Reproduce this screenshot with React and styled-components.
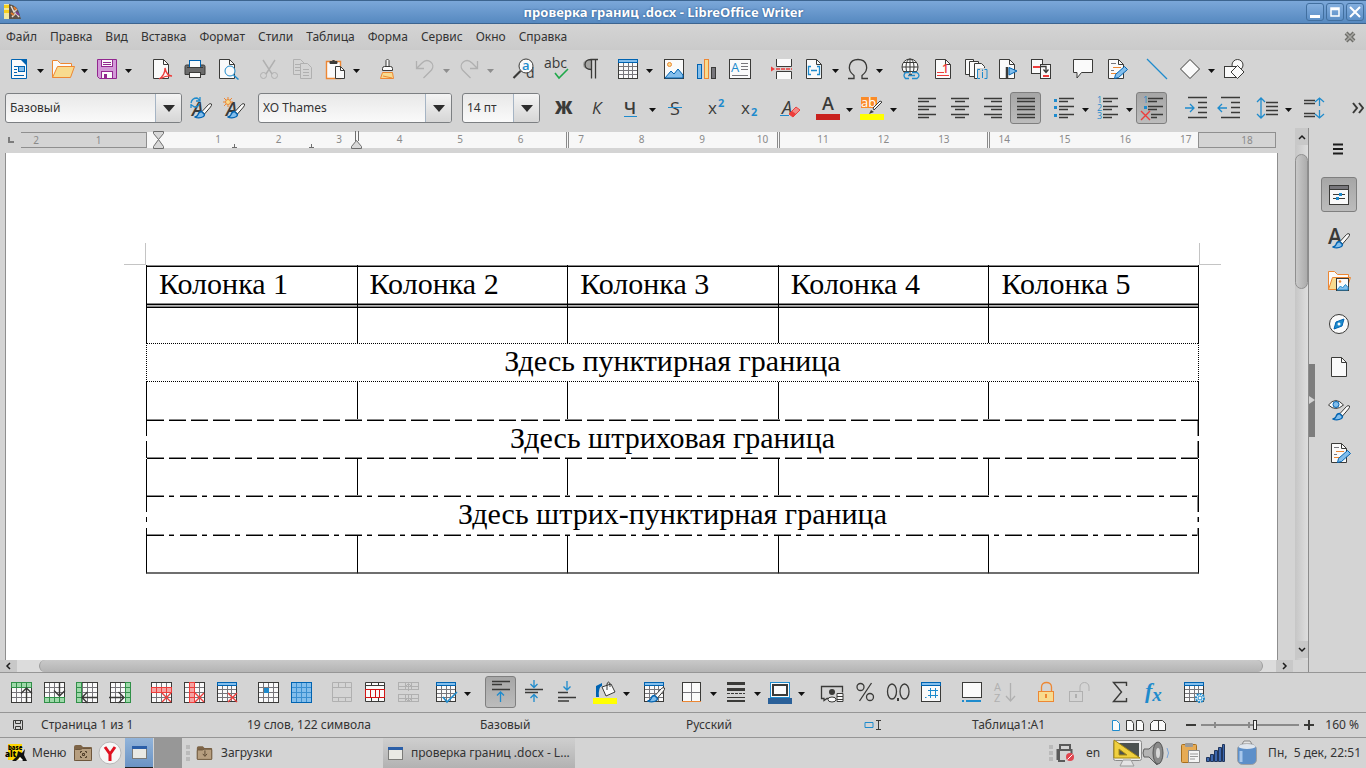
import React from "react";
import styled, { createGlobalStyle, css } from "styled-components";

const INK = "#3a3a38";
const BLUE = "#1e8bcd";
const NAVY = "#0063b1";
const SKY = "#83beec";
const PAPER = "#fafafa";
const ORANGE = "#ed8733";
const SAND = "#f8db8f";
const GREEN = "#309048";
const MINT = "#9fd9aa";
const RED = "#ed3d3b";
const MUTE = "#b0b0b0";

/* ---------- icon helpers ---------- */

const Grid = ({ x = 2.5, y = 2.5, w = 20, h = 20, cols = 4, rows = 4, line = INK, inner = "#77767b", fill = PAPER }) => {
  const parts = [];
  for (let i = 1; i < cols; i++) {
    parts.push(`M${Math.floor(x + (w * i) / cols) + 0.5} ${y}v${h}`);
  }
  for (let i = 1; i < rows; i++) {
    parts.push(`M${x} ${Math.floor(y + (h * i) / rows) + 0.5}h${w}`);
  }
  return (
    <>
      <rect x={x} y={y} width={w} height={h} fill={fill} />
      <path d={parts.join("")} stroke={inner} />
      <rect x={x} y={y} width={w} height={h} stroke={line} />
    </>
  );
};

const Cross = ({ x = 13, y = 13, s = 9 }) => (
  <path d={`M${x} ${y}l${s} ${s}m0 -${s}l-${s} ${s}`} stroke={RED} strokeWidth="1.4" />
);

const Brush = () => (
  <>
    <path d="M22.5 8q-1.500-1-3 .5l-6.500 7 2.500 2.500 6-7q1.500-2 1-3z" fill={PAPER} stroke={INK} />
    <path d="M15.500 18.500l-3-3q-2.500 0-3.500 3-1 2.500-3.500 2.500 5 2 9-.5 1-1 1-2z" fill={SKY} stroke={NAVY} strokeWidth="1.300" />
  </>
);

const Lines = ({ rows }) => (
  <path d={rows.map(([x, y, w]) => `M${x} ${y}h${w}`).join("")} stroke={INK} strokeWidth="1.3" />
);

const SheetTable = ({ children }) => (
  <>
    <Grid x={2.5} y={5.5} w={19} h={16} cols={4} rows={4} />
    <rect x="2.5" y="2.5" width="19" height="3" fill={SKY} stroke={NAVY} />
    {children}
  </>
);

const A = ({ x = 2, y = 18, size = 20, fill = INK, weight = 400, italic, children = "A" }) => (
  <text
    x={x}
    y={y}
    fontSize={size}
    fill={fill}
    stroke="none"
    fontFamily='"Open Sans", sans-serif'
    fontWeight={weight}
    fontStyle={italic ? "italic" : "normal"}
  >
    {children}
  </text>
);

const pageShape = "M4.5 2.5h10l5 5v14h-15z";

const icons = {
  newDoc: (
    <>
      <path d="M4.5 2.5h15v19h-15z" fill={PAPER} stroke={NAVY} />
      <path d="M13 2h7v7z" fill={NAVY} />
      <path d="M7 9.5h5M7 12.5h3M7 15.5h3M7 18.5h10" stroke={NAVY} />
      <rect x="11.5" y="9.5" width="6" height="5" fill={SKY} stroke={NAVY} />
    </>
  ),
  open: (
    <>
      <path d="M1.5 20.5v-17h5l3 3h11v4" fill={PAPER} stroke={ORANGE} />
      <path d="M1.5 20.5l5-11h17l-4 11z" fill={SAND} stroke={ORANGE} />
    </>
  ),
  save: (
    <>
      <path d="M2.5 2.5h19v19h-17l-2-2z" fill="#d39ad8" stroke="#92278f" />
      <rect x="6.5" y="2.5" width="11" height="7" fill={PAPER} stroke="#92278f" />
      <path d="M8 5.5h8M8 7.5h8" stroke="#92278f" />
      <rect x="6.5" y="14.5" width="11" height="7" fill={PAPER} stroke="#92278f" />
      <path d="M9 17h3v5h-3z" fill="#92278f" />
    </>
  ),
  pdf: (
    <>
      <path d="M3.5 2.5h10l5 5v14h-15z" fill={PAPER} stroke={INK} />
      <path d="M13.5 2.5v5h5" stroke={INK} />
      <path d="M9 22c5-3 6-7 6-11 1 5 3 8 7 8-5-.5-8 .5-11 2.5" stroke={RED} strokeWidth="1.3" />
    </>
  ),
  print: (
    <>
      <path d="M2 9.5q0-1.500 1.500-1.500h17q1.500 0 1.500 1.500v8h-20z" fill="#6b6b6b" stroke={INK} />
      <rect x="6.5" y="3.5" width="11" height="7" fill={PAPER} stroke={NAVY} />
      <path d="M4 10.5h16" stroke={INK} />
      <rect x="6.5" y="15.5" width="11" height="5" fill={PAPER} stroke={INK} />
    </>
  ),
  preview: (
    <>
      <path d="M3.5 2.5h10l5 5v14h-15z" fill={PAPER} stroke={INK} />
      <path d="M13.5 2.5v5h5" stroke={INK} />
      <circle cx="14" cy="14" r="5" fill={PAPER} stroke={BLUE} />
      <path d="M17.5 18l5 4.500" stroke={BLUE} strokeWidth="1.5" />
    </>
  ),
  cut: (
    <>
      <path d="M6 3l9 14M18 3l-9 14" stroke={MUTE} strokeWidth="1.4" />
      <circle cx="6.5" cy="18.5" r="3" stroke={MUTE} />
      <circle cx="17.5" cy="18.5" r="3" stroke={MUTE} />
    </>
  ),
  copy: (
    <>
      <path d="M3.5 2.5h7l4 4v11h-11z" stroke={MUTE} />
      <path d="M5 7.5h5M5 10.5h5M5 13.5h5" stroke={MUTE} />
      <path d="M10.5 6.5h7l4 4v11h-11z" fill="#d4d4d4" stroke={MUTE} />
      <path d="M13 12.5h6M13 15.5h6M13 18.5h6" stroke={MUTE} />
    </>
  ),
  paste: (
    <>
      <path d="M3.5 4.5h14v17h-14z" fill={PAPER} stroke={ORANGE} strokeWidth="1.4" />
      <path d="M7 6.5v-2h2q1.500-3 3 0h2v2z" fill={INK} stroke={INK} />
      <path d="M12.5 9.5h5l4 4v8h-9z" fill={PAPER} stroke={INK} />
      <path d="M17.5 9.5v4h4" stroke={INK} />
    </>
  ),
  brush: (
    <>
      <path d="M11 9.5v-6q1.500-3 3 0v6" fill={PAPER} stroke={INK} />
      <path d="M7.5 13.5v-2q0-2 2-2h6q2 0 2 2v2z" fill={PAPER} stroke={INK} />
      <path d="M7.5 15.5h10l1 6h-13z" fill={SAND} stroke={ORANGE} />
      <path d="M8 19l9 2" stroke={ORANGE} />
    </>
  ),
  undo: <path d="M3.5 4v7.500h7.500M4 11l5-5c6-6 14 1 9.500 7l-8 8" stroke={MUTE} strokeWidth="1.3" />,
  redo: <path d="M20.5 4v7.500h-7.500M20 11l-5-5c-6-6-14 1-9.500 7l8 8" stroke={MUTE} strokeWidth="1.3" />,
  find: (
    <>
      <A x={14} y={21} size={14}>d</A>
      <circle cx="14" cy="9" r="7" fill={PAPER} stroke={INK} />
      <path d="M1.5 21l7-7" stroke={INK} strokeWidth="2.2" />
      <A x={10} y={13} size={13} fill={BLUE} weight={600}>a</A>
    </>
  ),
  spell: (
    <>
      <A x={-1} y={11} size={14}>abc</A>
      <path d="M10 16l4 5 9-9" stroke="#1fa84a" strokeWidth="1.6" />
    </>
  ),
  pilcrow: (
    <>
      <path d="M13 2.500q-8 0-8 5t8 5z" fill="#a4a4a2" />
      <path d="M20 2.500h-7c-8 0-8 10 0 10M13.500 2.500v19M17.500 2.500v19" stroke={INK} strokeWidth="1.3" />
    </>
  ),
  table: <SheetTable />,
  image: (
    <>
      <rect x="2.5" y="2.5" width="19" height="19" fill={PAPER} stroke={INK} />
      <circle cx="7.5" cy="7.5" r="2" fill={SAND} stroke={ORANGE} />
      <path d="M3 21l6-7 3 3 4-5 5 6v3z" fill={SKY} stroke={NAVY} />
    </>
  ),
  chart: (
    <>
      <rect x="2.5" y="7.5" width="4" height="14" fill={SKY} stroke={NAVY} />
      <rect x="9.5" y="2.5" width="4" height="19" fill={SAND} stroke={ORANGE} />
      <rect x="16.5" y="10.5" width="4" height="11" fill="#77767b" stroke={INK} />
    </>
  ),
  textbox: (
    <>
      <rect x="1.5" y="2.5" width="21" height="19" fill={PAPER} stroke={INK} />
      <A x={3} y={15} size={13} fill={BLUE}>A</A>
      <path d="M13 6.5h7M13 9.5h7M13 12.5h7M4 18.5h16" stroke="#77767b" />
    </>
  ),
  pagebreak: (
    <>
      <path d="M7.5 2v7.500h15v-7.500M7.500 22v-7.500h15v7.500" fill={PAPER} stroke={INK} />
      <path d="M2 9.500l4 2.500-4 2.500z" fill={RED} />
      <path d="M7 12h16" stroke={RED} strokeWidth="1.5" strokeDasharray="4 1" />
    </>
  ),
  field: (
    <>
      <path d={pageShape} fill={PAPER} stroke={INK} />
      <path d="M14.5 2.5v5h5" stroke={INK} />
      <path d="M9 9.5h-2.500v8h2.500M15 9.500h2.500v8h-2.500M9 13.500h6" stroke={BLUE} strokeWidth="1.3" />
    </>
  ),
  omega: <path d="M2 21.5h6v-3c-8-6-5-16 4-16s12 10 4 16v3h6" stroke={INK} strokeWidth="1.3" />,
  link: (
    <>
      <circle cx="12" cy="10" r="8" fill={PAPER} stroke={INK} />
      <ellipse cx="12" cy="10" rx="4" ry="8" stroke={INK} />
      <path d="M12 2v16M4 10h16M5.500 5.500h13M5.500 14.500h13" stroke={INK} />
      <path d="M11 15.5h-3.500q-3 3 0 6h3.500M14 15.500h5q4 3 0 6h-5M10 18.500h7" fill="#d4d4d4" stroke={BLUE} strokeWidth="1.3" />
    </>
  ),
  footnote: (
    <>
      <path d={pageShape} fill={PAPER} stroke={INK} />
      <path d="M14.5 2.5v5h5" stroke={INK} />
      <path d="M6 15.5h7M6 18.5h12" stroke={RED} />
      <A x={11} y={16} size={12} fill={RED} weight={600}>1</A>
    </>
  ),
  endnote: (
    <>
      <path d="M1.5 2.5h8v15h-8z" fill={PAPER} stroke={INK} />
      <path d="M5.5 4.5h9v15h-9z" fill={PAPER} stroke={INK} />
      <path d="M10.5 6.5h7l3 3v12h-10z" fill={PAPER} stroke={INK} />
      <path d="M13 11h12v12h-12z" fill="#d4d4d4" />
      <path d="M16 12.5h-2.500v9h2.500M20.500 12.500h2.500v9h-2.500M18.500 15v6M18.500 12.500v1.500" stroke={BLUE} />
    </>
  ),
  bookmark: (
    <>
      <path d="M2.5 2.5h10l5 5v14h-15z" fill={PAPER} stroke={INK} />
      <path d="M12.5 2.5v5h5" stroke={INK} />
      <path d="M10 10v12" stroke={INK} strokeWidth="2.5" />
      <path d="M12 10.5l8 3.500-8 4z" fill={SKY} stroke={NAVY} />
    </>
  ),
  crossref: (
    <>
      <rect x="1.5" y="2.5" width="11" height="14" fill={PAPER} stroke={INK} />
      <path d="M3 10h8" stroke={RED} strokeWidth="2" />
      <rect x="10.5" y="7.5" width="10" height="14" fill={PAPER} stroke={INK} />
      <path d="M10 9.5h6v5M13.500 12.500l2.500 3 2.500-3" stroke={INK} strokeWidth="1.3" />
      <path d="M13 19h6" stroke={RED} strokeWidth="2" />
    </>
  ),
  comment: <path d="M2.5 2.5h19v13h-11l-4.500 5.500v-5.500h-3.500z" fill={PAPER} stroke={INK} />,
  track: (
    <>
      <path d={pageShape} fill={PAPER} stroke={INK} />
      <path d="M14.5 2.5v5h5" stroke={INK} />
      <path d="M7 6.5h5M7 13.5h3" stroke="#77767b" />
      <path d="M9 10.5h8M7 16.5h6" stroke={ORANGE} />
      <path d="M10.5 21.5l1-4 9-8 3 3-9 8z" fill={SKY} stroke={NAVY} />
    </>
  ),
  line: <path d="M2 2l20 20" stroke={BLUE} strokeWidth="1.3" />,
  diamond: <path d="M12 2.5l9.500 9.500-9.500 9.500-9.500-9.500z" fill={PAPER} stroke={INK} />,
  shapes: (
    <>
      <circle cx="15.5" cy="8" r="5.5" fill={PAPER} stroke={INK} />
      <rect x="2.5" y="9.5" width="11" height="11" fill={PAPER} stroke={INK} />
      <path d="M15.5 8.5l6.500 6.500-6.500 6.500-6.500-6.500z" fill={PAPER} stroke={INK} />
    </>
  ),
  updateStyle: (
    <>
      <A x={3} y={20} size={19} weight={600} italic>A</A>
      <path d="M2 7q1-5 6-5l2.500 2M11 1v4h-4M10.500 7q-1 4-5 4l-3-2M2 12v-4" stroke={BLUE} strokeWidth="1.3" />
      <Brush />
    </>
  ),
  newStyle: (
    <>
      <A x={4} y={20} size={19} weight={600} italic>A</A>
      <circle cx="6" cy="6" r="2.5" fill={SAND} stroke={ORANGE} />
      <path d="M6 1v2M6 9v2M1 6h2M9 6h2M2 2l2 2M10 2l-2 2M2 10l2-2" stroke={ORANGE} />
      <Brush />
    </>
  ),
  bold: <A x={2} y={18} size={17} weight={800}>Ж</A>,
  italic: <A x={6} y={18} size={17} italic>К</A>,
  underline: (
    <>
      <A x={5} y={18} size={17} weight={600}>Ч</A>
      <path d="M5 20.5h13" stroke={BLUE} />
    </>
  ),
  strike: (
    <>
      <A x={7} y={19} size={18}>S</A>
      <path d="M5 11.5h14" stroke={BLUE} />
    </>
  ),
  superscript: (
    <>
      <A x={4} y={18} size={17}>x</A>
      <A x={14} y={11} size={11} fill={BLUE} weight={700}>2</A>
    </>
  ),
  subscript: (
    <>
      <A x={4} y={18} size={17}>x</A>
      <A x={14} y={20} size={11} fill={BLUE} weight={700}>2</A>
    </>
  ),
  clearFmt: (
    <>
      <A x={4} y={18} size={18} italic>A</A>
      <path d="M2 19.5h9" stroke={BLUE} />
      <path d="M11 18l7-7 4 3-7 7z" fill="#f08a85" stroke={RED} />
      <path d="M11 18l3-3 4 3-3 3z" fill={RED} />
    </>
  ),
  fontColor: (
    <>
      <A x={6} y={14} size={18} weight={600}>A</A>
      <path d="M0 18h24v6h-24z" fill="#c9211e" />
    </>
  ),
  highlight: (
    <>
      <path d="M1 1h16v11h-16z" fill="#fb8b28" />
      <A x={1} y={11} size={13} fill="#fff">ab</A>
      <path d="M22 6l-8 8-1-2 7-7z" fill={PAPER} stroke={INK} />
      <path d="M9 18l2-4 3 2z" fill={INK} />
      <path d="M0 18h24v6h-24z" fill="#ff0" />
    </>
  ),
  left: <Lines rows={[[3, 2.5, 18], [3, 5.5, 11], [3, 10.5, 18], [3, 13.5, 11], [3, 18.5, 18], [3, 21.5, 11]]} />,
  center: <Lines rows={[[3, 2.5, 18], [7, 5.5, 10], [3, 10.5, 18], [7, 13.5, 10], [3, 18.5, 18], [7, 21.5, 10]]} />,
  right: <Lines rows={[[3, 2.5, 18], [10, 5.5, 11], [3, 10.5, 18], [10, 13.5, 11], [3, 18.5, 18], [10, 21.5, 11]]} />,
  justify: <Lines rows={[2.5, 5.5, 10.5, 13.5, 18.5, 21.5].map((y) => [3, y, 18])} />,
  bullets: (
    <>
      <Lines rows={[[7, 2.5, 15], [7, 5.5, 9], [7, 10.5, 15], [7, 13.5, 9], [7, 18.5, 15], [7, 21.5, 9]]} />
      <path d="M2 3h3v3h-3zM2 10h3v3h-3zM2 18h3v3h-3z" fill={BLUE} />
    </>
  ),
  numbers: (
    <>
      <Lines rows={[[7, 2.5, 15], [7, 5.5, 9], [7, 10.5, 15], [7, 13.5, 9], [7, 18.5, 15], [7, 21.5, 9]]} />
      <A x={1} y={7} size={9} fill={BLUE}>1</A>
      <A x={1} y={15} size={9} fill={BLUE}>2</A>
      <A x={1} y={23} size={9} fill={BLUE}>3</A>
    </>
  ),
  noList: (
    <>
      <Lines rows={[[8, 2.5, 15], [8, 5.5, 9], [8, 10.5, 15], [8, 13.5, 9], [11, 18.5, 12], [11, 21.5, 6]]} />
      <A x={3} y={7} size={9} fill={BLUE}>1</A>
      <path d="M4 10h3v3h-3z" fill={BLUE} />
      <Cross x={1} y={15} s={9} />
    </>
  ),
  indentMore: (
    <>
      <Lines rows={[[4, 1.5, 19], [14, 6.5, 9], [14, 11.5, 9], [14, 16.5, 9], [4, 21.5, 19]]} />
      <path d="M1 12h9M6 8l4 4-4 4" stroke={BLUE} strokeWidth="1.3" />
    </>
  ),
  indentLess: (
    <>
      <Lines rows={[[4, 1.5, 19], [14, 6.5, 9], [14, 11.5, 9], [14, 16.5, 9], [4, 21.5, 19]]} />
      <path d="M1 12h9M5 8l-4 4 4 4" stroke={BLUE} strokeWidth="1.3" />
    </>
  ),
  lineSpacing: (
    <>
      <Lines rows={[[11, 6.5, 12], [11, 10.5, 12], [11, 14.5, 12], [11, 18.5, 12]]} />
      <path d="M6 2v20M2 6l4-4 4 4M2 18l4 4 4-4" stroke={BLUE} strokeWidth="1.3" />
    </>
  ),
  paraSpacing: (
    <>
      <Lines rows={[[3, 4.5, 11], [3, 7.5, 11], [3, 17.5, 11], [3, 20.5, 11]]} />
      <path d="M18.5 10v-8M14 6l4.500-4 4.500 4M18.500 14v8M14 18l4.500 4 4.500-4" stroke={BLUE} strokeWidth="1.3" />
    </>
  ),
  rowAbove: (
    <>
      <Grid />
      <Grid x={2.5} y={2.5} w={20} h={5} rows={1} fill={MINT} line={GREEN} inner={GREEN} />
      <path d="M17.5 22v-14M12 13.500l5.500-5.500 5.500 5.500" stroke={INK} strokeWidth="1.4" />
    </>
  ),
  rowBelow: (
    <>
      <Grid />
      <Grid x={2.5} y={17.5} w={20} h={5} rows={1} fill={MINT} line={GREEN} inner={GREEN} />
      <path d="M17.5 2v14M12 10.500l5.500 5.500 5.500-5.500" stroke={INK} strokeWidth="1.4" />
    </>
  ),
  colBefore: (
    <>
      <Grid />
      <Grid x={1.5} y={2.5} w={5} h={20} cols={1} fill={MINT} line={GREEN} inner={GREEN} />
      <path d="M23 17.5h-16M12.500 12l-5.500 5.500 5.500 5.500" stroke={INK} strokeWidth="1.4" />
    </>
  ),
  colAfter: (
    <>
      <Grid />
      <Grid x={17.5} y={2.5} w={5} h={20} cols={1} fill={MINT} line={GREEN} inner={GREEN} />
      <path d="M1 17.5h15M10.500 12l5.500 5.500-5.500 5.500" stroke={INK} strokeWidth="1.4" />
    </>
  ),
  delRow: (
    <>
      <Grid />
      <Grid x={2.5} y={7.5} w={20} h={5} rows={1} fill="#f5a3a2" line={RED} inner={RED} />
      <Cross />
    </>
  ),
  delCol: (
    <>
      <Grid />
      <Grid x={7.5} y={2.5} w={5} h={20} cols={1} fill="#f5a3a2" line={RED} inner={RED} />
      <Cross />
    </>
  ),
  delTable: <SheetTable><Cross /></SheetTable>,
  selectCell: (
    <>
      <Grid />
      <path d="M8 8h5v5h-5z" fill={BLUE} />
    </>
  ),
  selectTable: <Grid fill={SKY} line={NAVY} inner="#3a8fd0" />,
  merge: (
    <path
      d="M2.5 2.5h19v19h-19zM2.500 7.500h19M2.500 17.500h19M8.500 2.500v5M15.500 2.500v5M8.500 17.500v4M15.500 17.500v4"
      stroke={MUTE}
    />
  ),
  split: (
    <>
      <path d="M2.5 2.5h19v19h-19zM2.500 5.500h19M8.500 2.500v3M15.500 2.500v3M8.500 17.500v4M15.500 17.500v4" fill={PAPER} stroke={INK} />
      <Grid x={2.5} y={9.5} w={19} h={8} rows={1} line="#d41515" inner="#d41515" />
    </>
  ),
  splitTable: (
    <>
      <Grid x={2.5} y={2.5} w={20} h={7} cols={3} rows={2} fill="none" line={MUTE} inner={MUTE} />
      <Grid x={2.5} y={14.5} w={20} h={7} cols={3} rows={2} fill="none" line={MUTE} inner={MUTE} />
      <path d="M12.5 11v-7M9 7l3.500-3.500 3.500 3.500M12.500 14v7M9 18l3.500 3.500 3.500-3.500" stroke={MUTE} />
    </>
  ),
  optimize: (
    <SheetTable>
      <path d="M9 17l4 5 10-10" stroke={BLUE} strokeWidth="1.6" />
    </SheetTable>
  ),
  alignTop: (
    <>
      <Lines rows={[[3, 1.5, 18], [3, 4.5, 10], [3, 9.5, 18]]} />
      <path d="M11.5 22v-10M8 15.500l3.500-3.500 3.500 3.500" stroke={BLUE} strokeWidth="1.3" />
    </>
  ),
  alignMiddle: (
    <>
      <Lines rows={[[3, 9.5, 18], [3, 12.5, 13]]} />
      <path d="M12 0v7M8.500 4l3.500 3.500 3.500-3.500M12 22v-7M8.500 18l3.500-3.500 3.500 3.500" stroke={BLUE} strokeWidth="1.3" />
    </>
  ),
  alignBottom: (
    <>
      <Lines rows={[[3, 12.5, 10], [3, 17.5, 18], [3, 21, 11]]} />
      <path d="M12 1v9M8.500 6.500l3.500 3.500 3.500-3.500" stroke={BLUE} strokeWidth="1.3" />
    </>
  ),
  fill: (
    <>
      <path d="M3 6l6-3v3q-4 1-3 11h-3z" fill={NAVY} />
      <path d="M9 7l9-3 4 8-9 4z" fill={PAPER} stroke={INK} />
      <path d="M14 10v-6q1.500-4 3 0v3" stroke={INK} />
      <path d="M0 18h24v6h-24z" fill="#ff0" />
    </>
  ),
  tableStyle: <SheetTable><Brush /></SheetTable>,
  borders: (
    <>
      <Grid x={2.5} y={2.5} w={18} h={19} cols={2} rows={2} />
      <path d="M2 21.5h19" stroke={ORANGE} />
    </>
  ),
  borderStyle: (
    <>
      <path d="M3 3.5h18M3 9.500h18" stroke={INK} strokeWidth="3" />
      <path d="M3 13.5h18" stroke={INK} strokeDasharray="3 1" />
      <path d="M3 17.5h18" stroke={INK} />
      <path d="M3 21h18" stroke={INK} strokeWidth="2" />
    </>
  ),
  borderColor: (
    <>
      <rect x="2.5" y="2.5" width="19" height="15" fill={PAPER} stroke={BLUE} />
      <rect x="5" y="5" width="14" height="10" stroke={INK} strokeWidth="2" />
      <path d="M0 18h24v6h-24z" fill="#2a6099" />
    </>
  ),
  currency: (
    <>
      <path d="M9 18.5h-2l-3 2v-2h-2.500v-12h21v6" stroke={INK} strokeWidth="1.3" />
      <circle cx="12" cy="12" r="3" fill={INK} />
      <path d="M17 13.5h6v8h-6zM17 16.500h6M17 19.500h6" fill={PAPER} stroke={INK} />
      <ellipse cx="12" cy="19.5" rx="4" ry="2.5" fill={PAPER} stroke={INK} />
    </>
  ),
  percent: (
    <>
      <circle cx="7.500" cy="7" r="3.5" stroke={INK} strokeWidth="1.3" />
      <circle cx="17" cy="17" r="3.5" stroke={INK} strokeWidth="1.3" />
      <path d="M18.5 3l-12 18" stroke={INK} strokeWidth="1.3" />
    </>
  ),
  decimal: (
    <>
      <ellipse cx="6" cy="11.5" rx="4.5" ry="7.5" stroke={INK} strokeWidth="1.3" />
      <ellipse cx="18.5" cy="11.5" rx="4.5" ry="7.5" stroke={INK} strokeWidth="1.3" />
      <path d="M11 18h2v3h-2z" fill={INK} />
    </>
  ),
  numFormat: (
    <>
      <rect x="2.5" y="2.5" width="19" height="19" fill={PAPER} stroke={INK} />
      <rect x="2.5" y="2.5" width="19" height="3" fill={SKY} stroke={NAVY} />
      <path d="M11.5 8v10M16.500 8v10M9 10.500h10M9 15.500h10M6 17.500h1.500" stroke={BLUE} />
    </>
  ),
  caption: (
    <>
      <rect x="2.5" y="2.5" width="19" height="15" fill={PAPER} stroke={INK} />
      <path d="M2 21h2M6 21h15" stroke={BLUE} strokeWidth="2" />
    </>
  ),
  sort: (
    <>
      <A x={1} y={11} size={11} fill={MUTE}>A</A>
      <A x={1} y={22} size={11} fill={MUTE}>Z</A>
      <path d="M17.5 3v18M13 16l4.500 5 4.500-5" stroke={MUTE} strokeWidth="1.3" />
    </>
  ),
  lock: (
    <>
      <path d="M7.5 11v-4c0-6 10-6 10 0v4" stroke={ORANGE} strokeWidth="1.3" />
      <rect x="4.5" y="11.5" width="15" height="10" fill={SAND} stroke={ORANGE} />
      <path d="M12 14v4" stroke={ORANGE} strokeWidth="2" />
    </>
  ),
  unlock: (
    <>
      <path d="M13 11v-4c0-6 9-6 9 0v4" stroke={MUTE} />
      <rect x="2.5" y="11.5" width="13" height="10" stroke={MUTE} />
      <path d="M9 14v4" stroke={MUTE} strokeWidth="2" />
    </>
  ),
  sum: <path d="M18.5 6v-3.500h-13l8 9.500-8 9.500h13v-3.500" stroke={INK} strokeWidth="1.4" />,
  formula: (
    <text x="4" y="18" fontSize="22" fontWeight="700" fontStyle="italic" fill={BLUE} fontFamily='"Liberation Serif", serif'>
      f<tspan dy="3" fontSize="19">x</tspan>
    </text>
  ),
  tableProps: (
    <SheetTable>
      <circle cx="18" cy="18" r="4" fill={PAPER} stroke={BLUE} strokeWidth="2" strokeDasharray="2 1" />
      <circle cx="18" cy="18" r="2" stroke={BLUE} />
    </SheetTable>
  ),
  burger: <path d="M6 7.5h10M6 12h10M6 16.500h10" stroke="#1c1c1c" strokeWidth="2" />,
  properties: (
    <>
      <rect x="2.5" y="2.5" width="19" height="19" fill={PAPER} stroke={INK} />
      <path d="M3 3h18v3h-18z" fill="#77767b" />
      <path d="M2 6.5h20M6 11.500h12M6 15.500h12" stroke={INK} />
      <path d="M12 10h3v3h-3zM9 14h3v3h-3z" fill={BLUE} />
    </>
  ),
  styles: (
    <>
      <A x={1} y={18} size={21} weight={600}>A</A>
      <Brush />
    </>
  ),
  gallery: (
    <>
      <path d="M1.5 20.5v-18h6l3 3h11v4" fill={PAPER} stroke={ORANGE} />
      <path d="M1.5 20.5l4-12h18l-4 12z" fill={SAND} stroke={ORANGE} />
      <rect x="9.5" y="9.5" width="12" height="12" fill={PAPER} stroke={INK} />
      <circle cx="13" cy="12.5" r="1.3" fill={ORANGE} />
      <path d="M10 21l3.500-4 2 2 3-3.500 2.500 3v2.500z" fill={SKY} stroke={BLUE} />
    </>
  ),
  navigator: (
    <>
      <circle cx="12" cy="12" r="9.5" fill={PAPER} stroke={INK} />
      <path d="M17 7l-2 7-8 3 2-7z" fill={BLUE} stroke={NAVY} />
      <circle cx="12" cy="12" r="1.5" fill={PAPER} />
    </>
  ),
  page: (
    <>
      <path d={pageShape} fill={PAPER} stroke={INK} />
      <path d="M14.5 2.5v5h5" stroke={INK} />
    </>
  ),
  inspector: (
    <>
      <path d="M1.5 7q7-9 15 0-8 7-15 0z" fill={PAPER} stroke={INK} />
      <circle cx="9" cy="6.5" r="3" fill={SKY} stroke={NAVY} />
      <Brush />
    </>
  ),
};

const Glyph = ({ name }) => (
  <svg width="24" height="24" viewBox="0 0 24 24" fill="none" overflow="visible" aria-hidden="true">
    {icons[name]}
  </svg>
);

/* ---------- toolbar data: numbers are gaps ---------- */

const standardBar = [
  ["newDoc", "Создать", 1], ["open", "Открыть", 1], ["save", "Сохранить", 1], 11,
  ["pdf", "Экспорт в PDF"], ["print", "Печать"], ["preview", "Просмотр печати"], 8,
  ["cut", "Вырезать"], ["copy", "Копировать"], ["paste", "Вставить", 1], 8,
  ["brush", "Копировать формат"], 5, ["undo", "Отменить", 2], ["redo", "Вернуть", 2], 11,
  ["find", "Найти и заменить"], ["spell", "Орфография"], ["pilcrow", "Непечатаемые знаки"], 5,
  ["table", "Таблица", 1], 2, ["image", "Изображение"], ["chart", "Диаграмма"], ["textbox", "Врезка"], 8,
  ["pagebreak", "Разрыв страницы"], ["field", "Поле", 1], ["omega", "Спецсимвол", 1], 8,
  ["link", "Гиперссылка"], ["footnote", "Сноска"], ["endnote", "Концевая сноска"],
  ["bookmark", "Закладка"], ["crossref", "Перекрёстная ссылка"], 8,
  ["comment", "Комментарий"], ["track", "Правки"], 8,
  ["line", "Линия"], ["diamond", "Фигуры", 1], ["shapes", "Рисование"],
];

const charBar = [
  8, ["bold", "Полужирный"], ["italic", "Курсив"], ["underline", "Подчёркнутый", 1],
  ["strike", "Зачёркнутый"], 8, ["superscript", "Верхний индекс"], ["subscript", "Нижний индекс"], 8,
  ["clearFmt", "Очистить формат"], 5, ["fontColor", "Цвет шрифта", 1], ["highlight", "Цвет выделения", 1], 11,
  ["left", "По левому краю"], ["center", "По центру"], ["right", "По правому краю"],
  ["justify", "По ширине", 0, true], 5, ["bullets", "Маркеры", 1], ["numbers", "Нумерация", 1],
  ["noList", "Без списка", 0, true], 11, ["indentMore", "Увеличить отступ"], ["indentLess", "Уменьшить отступ"], 5,
  ["lineSpacing", "Интервал", 1], 2, ["paraSpacing", "Интервал между абзацами"],
];

const tableBar = [
  ["rowAbove", "Строка выше"], ["rowBelow", "Строка ниже"], ["colBefore", "Столбец слева"], ["colAfter", "Столбец справа"], 8,
  ["delRow", "Удалить строку"], ["delCol", "Удалить столбец"], ["delTable", "Удалить таблицу"], 8,
  ["selectCell", "Выделить ячейку"], ["selectTable", "Выделить таблицу"], 8,
  ["merge", "Объединить"], ["split", "Разбить"], ["splitTable", "Разбить таблицу"], 5,
  ["optimize", "Оптимизировать", 1], 11,
  ["alignTop", "По верху", 0, true], ["alignMiddle", "По середине"], ["alignBottom", "По низу"], 5,
  ["fill", "Заливка", 1], 5, ["tableStyle", "Стиль таблицы"], 5,
  ["borders", "Обрамление", 1], ["borderStyle", "Стиль линии", 1], ["borderColor", "Цвет линии", 1], 8,
  ["currency", "Денежный"], ["percent", "Процентный"], ["decimal", "Десятичный"], ["numFormat", "Числовой формат"], 8,
  ["caption", "Название"], ["sort", "Сортировка"], 8,
  ["lock", "Защитить"], ["unlock", "Снять защиту"], 8,
  ["sum", "Сумма"], ["formula", "Формула"], 8, ["tableProps", "Свойства таблицы"],
];

const Arrow = ({ muted }) => (
  <svg width="7" height="4" viewBox="0 0 7 4" aria-hidden="true">
    <path d="M0 0h7l-3.500 4z" fill={muted ? "#8e8e8e" : "#111"} />
  </svg>
);

const Tools = ({ items }) =>
  items.map((item, i) => {
    if (typeof item === "number") return <Gap key={i} $w={item} />;
    const [name, label, drop, pressed] = item;
    return (
      <React.Fragment key={name}>
        <Tool aria-label={label} aria-pressed={pressed} $pressed={pressed}>
          <Glyph name={name} />
        </Tool>
        {drop ? (
          <DropArrow aria-label={`${label}: список`}>
            <Arrow muted={drop === 2} />
          </DropArrow>
        ) : null}
      </React.Fragment>
    );
  });

const Combo = ({ label, value, width }) => (
  <ComboBox $w={width}>
    <select aria-label={label} defaultValue={value}>
      <option>{value}</option>
    </select>
    <span>
      <svg width="12" height="7" viewBox="0 0 12 7" aria-hidden="true">
        <path d="M0 0h12l-6 7z" fill="#2c2c2c" />
      </svg>
    </span>
  </ComboBox>
);

const Chevron = ({ d }) => (
  <svg width="8" height="8" viewBox="0 0 8 8" fill="none" aria-hidden="true">
    <path d={d} stroke="#1c1c1c" strokeWidth="1.5" />
  </svg>
);

const Folder = ({ mark, size = 20 }) => (
  <svg width={size} height="18" viewBox="0 0 20 18" fill="none" aria-hidden="true">
    <path d="M1 3q0-2 2-2h5l2 2h8q1 0 1 1v12q0 1-1 1h-16q-1 0-1-1z" fill="#7d6447" />
    <path d="M1.5 6.500q0-1 1-1h5l2-1h8q1 0 1 1v10q0 1-1 1h-15q-1 0-1-1z" fill="#b79f80" stroke="#6d563c" />
    <path d={mark} stroke="#4f3d28" />
  </svg>
);

const WindowIcon = () => (
  <svg width="15" height="13" viewBox="0 0 15 13" aria-hidden="true">
    <rect x=".5" y=".5" width="14" height="12" fill="#e9e9e4" stroke="#7b7b78" />
    <path d="M0 0h15v3h-15z" fill="#2b5fa8" />
  </svg>
);

const menus = ["Файл", "Правка", "Вид", "Вставка", "Формат", "Стили", "Таблица", "Форма", "Сервис", "Окно", "Справка"];
const columns = [1, 2, 3, 4, 5];

const Blank = ({ height, last }) => (
  <tr>
    {columns.map((n) => (
      <Cell key={n} $h={height} $last={last} />
    ))}
  </tr>
);

const App = () => {
  return (
    <>
      <GlobalStyle />
      <Window>
        <TitleBar>
          <svg width="18" height="18" viewBox="0 0 18 18" aria-hidden="true">
            <path d="M1 1h5v15h-5z" fill="#f1e9a0" />
            <path d="M1 2h5v3h-5zM1 7h5v3h-5z" fill="#f6cf1c" />
            <path d="M6 1q9 1 11 12l1 3h-12z" fill="#5e5248" />
            <path d="M8 3l3 6 3-3M9 14l4-4 3 4" stroke="#e8e0d4" strokeWidth="1.5" fill="none" />
            <path d="M11 4l2 3M8 10l3 2" stroke="#e27a2c" strokeWidth="2" />
            <path d="M13 9l3 3" stroke="#7c3f8e" strokeWidth="2" />
          </svg>
          <h1>проверка границ .docx - LibreOffice Writer</h1>
          <WindowButtons>
            <button aria-label="Свернуть">
              <svg width="16" height="16" viewBox="0 0 16 16"><path d="M3 11h10v3h-10z" fill="#fff" /></svg>
            </button>
            <button aria-label="Развернуть">
              <svg width="16" height="16" viewBox="0 0 16 16">
                <path d="M4 4h8v8h-8zM4 5.500h8" fill="none" stroke="#fff" strokeWidth="1.5" />
              </svg>
            </button>
            <button aria-label="Закрыть">
              <svg width="16" height="16" viewBox="0 0 16 16"><path d="M3 3l10 10M13 3l-10 10" stroke="#fff" strokeWidth="2" /></svg>
            </button>
          </WindowButtons>
        </TitleBar>

        <MenuBar>
          {menus.map((m) => (
            <button key={m}>{m}</button>
          ))}
          <CloseDoc aria-label="Закрыть документ">
            <svg width="12" height="12" viewBox="0 0 12 12">
              <path d="M2 2l8 8M10 2l-8 8" stroke="#6e6e6a" strokeWidth="4" />
              <path d="M2 2l8 8M10 2l-8 8" stroke="#a8a8a4" strokeWidth="1.5" />
            </svg>
          </CloseDoc>
        </MenuBar>

        <ToolBar $h={38} $pad={2}>
          <Tools items={standardBar} />
        </ToolBar>

        <ToolBar $h={40} $pad={5}>
          <Combo label="Стиль абзаца" value="Базовый" width={177} />
          <Gap $w={2} />
          <Tools items={[["updateStyle", "Обновить стиль"], ["newStyle", "Создать стиль"]]} />
          <Gap $w={8} />
          <Combo label="Шрифт" value="XO Thames" width={194} />
          <Gap $w={10} />
          <Combo label="Размер шрифта" value="14 пт" width={78} />
          <Tools items={charBar} />
          <More aria-label="Ещё">
            <svg width="12" height="12" viewBox="0 0 12 12" fill="none">
              <path d="M1 1l4 5-4 5M7 1l4 5-4 5" stroke={INK} strokeWidth="2" />
            </svg>
          </More>
        </ToolBar>

        <Workspace>
          <Editor>
            <EditorRow>
              <PaperColumn>
                <Ruler>
                  <TabStop />
                  <RulerMargin $w={126} $side="left">
                    <i>2</i>
                    <i>1</i>
                  </RulerMargin>
                  <RulerBody>
                    {Array.from({ length: 17 }, (_, i) => (
                      <i key={i}>{i + 1}</i>
                    ))}
                    <Marker $at="12px">
                      <svg width="13" height="18" viewBox="0 0 13 18">
                        <path d="M1.5 .5h10v2l-5 6-5-6zM1.500 17.500h10v-2l-5-7-5 7z" fill="#d8d8d8" stroke="#6e6e6e" />
                      </svg>
                    </Marker>
                    <TabTick $at="87px" />
                    <TabTick $at="164px" />
                    <Marker $at="210px">
                      <svg width="13" height="18" viewBox="0 0 13 18">
                        <path d="M5.500 0v10M8.500 0v10" stroke="#6e6e6e" />
                        <path d="M1.500 17.500h10v-2l-5-6-5 6z" fill="#d8d8d8" stroke="#6e6e6e" />
                      </svg>
                    </Marker>
                    <ColumnMark $at={40} />
                    <ColumnMark $at={60} />
                    <ColumnMark $at={80} />
                  </RulerBody>
                  <RulerMargin $w={78} $side="right">
                    <i>18</i>
                  </RulerMargin>
                </Ruler>
                <Page>
                  <TableWrap>
                    <CropMark $side="left" />
                    <CropMark $side="right" />
                    <DocTable>
                      <thead>
                        <tr>
                          {columns.map((n) => (
                            <HeadCell key={n}>Колонка {n}</HeadCell>
                          ))}
                        </tr>
                      </thead>
                      <tbody>
                        <Blank height={35} />
                        <tr>
                          <Merged colSpan={5} $kind="dotted" $h={39}>Здесь пунктирная граница</Merged>
                        </tr>
                        <Blank height={37} />
                        <tr>
                          <Merged colSpan={5} $kind="dashed" $h={40}>Здесь штриховая граница</Merged>
                        </tr>
                        <Blank height={36} />
                        <tr>
                          <Merged colSpan={5} $kind="dashdot" $h={41}>Здесь штрих-пунктирная граница</Merged>
                        </tr>
                        <Blank height={38} last />
                      </tbody>
                    </DocTable>
                  </TableWrap>
                </Page>
              </PaperColumn>
              <VScroll>
                <button aria-label="Вверх"><Chevron d="M1 6l3-3 3 3" /></button>
                <div><VThumb /></div>
                <button aria-label="Вниз"><Chevron d="M1 2l3 3 3-3" /></button>
              </VScroll>
            </EditorRow>
            <HScroll>
              <button aria-label="Влево"><Chevron d="M5 1l-3 3 3 3" /></button>
              <div><HThumb /></div>
              <button aria-label="Вправо"><Chevron d="M2 1l3 3-3 3" /></button>
            </HScroll>
          </Editor>
          <SideBar>
            <Handle aria-label="Скрыть панель">
              <svg width="6" height="8" viewBox="0 0 6 8"><path d="M0 0l6 4-6 4z" fill="#d4d4d4" /></svg>
            </Handle>
            <SideTabs>
              <SideTab aria-label="Параметры боковой панели" $menu><Glyph name="burger" /></SideTab>
              <SideTab aria-label="Свойства" aria-pressed="true" $pressed><Glyph name="properties" /></SideTab>
              <SideTab aria-label="Стили"><Glyph name="styles" /></SideTab>
              <SideTab aria-label="Галерея"><Glyph name="gallery" /></SideTab>
              <SideTab aria-label="Навигатор"><Glyph name="navigator" /></SideTab>
              <SideTab aria-label="Страница"><Glyph name="page" /></SideTab>
              <SideTab aria-label="Инспектор стилей"><Glyph name="inspector" /></SideTab>
              <SideTab aria-label="Управление правками"><Glyph name="track" /></SideTab>
            </SideTabs>
          </SideBar>
        </Workspace>

        <TableToolBar>
          <Tools items={tableBar} />
        </TableToolBar>

        <StatusBar>
          <SaveState>
            <svg width="12" height="12" viewBox="0 0 12 12" fill="none" stroke={INK}>
              <path d="M1.500 1.500h9v9h-8l-1-1zM3.500 1.500v3h5v-3M3.500 10.500v-3h5v3" />
            </svg>
          </SaveState>
          <span>Страница 1 из 1</span>
          <span>19 слов, 122 символа</span>
          <span>Базовый</span>
          <span>Русский</span>
          <span>
            <svg width="18" height="12" viewBox="0 0 18 12" fill="none">
              <path d="M1 3.500h8v5h-8z" stroke={BLUE} />
              <path d="M12 1.500h5M12 10.500h5M14.500 1.500v9" stroke={INK} />
            </svg>
          </span>
          <span>Таблица1:A1</span>
          <ViewModes>
            <button aria-label="Одна страница">
              <svg width="9" height="11" viewBox="0 0 9 11" fill={PAPER} stroke={BLUE}><path d="M.5 .5h4l3 3v7h-7z" /></svg>
            </button>
            <button aria-label="Несколько страниц">
              <svg width="19" height="11" viewBox="0 0 19 11" fill={PAPER} stroke={INK}><path d="M.5 .5h5l2 3v7h-7zM10.500 .5h5l2 3v7h-7z" /></svg>
            </button>
            <button aria-label="Разворот">
              <svg width="17" height="11" viewBox="0 0 17 11" fill={PAPER} stroke={INK}><path d="M8.500 .5v10h-8v-7l3-3zM8.500 .5v10h7v-7l-3-3z" /></svg>
            </button>
          </ViewModes>
          <ZoomBox>
            <button aria-label="Уменьшить">
              <svg width="10" height="10" viewBox="0 0 10 10"><path d="M0 5h10" stroke={INK} strokeWidth="2" /></svg>
            </button>
            <ZoomSlider type="range" min="0" max="100" defaultValue="55" aria-label="Масштаб" />
            <button aria-label="Увеличить">
              <svg width="10" height="10" viewBox="0 0 10 10"><path d="M0 5h10M5 0v10" stroke={INK} strokeWidth="2" /></svg>
            </button>
            <output>160 %</output>
          </ZoomBox>
        </StatusBar>

        <TaskBar>
          <Launcher $w={69} $pad={5} $gap={4}>
            <svg width="23" height="20" viewBox="0 0 23 20" aria-hidden="true">
              <path d="M3 1h14v16h-14z" fill="#ffd500" />
              <text x="3" y="7" fontSize="6" fontWeight="800" fontFamily='"Open Sans", sans-serif'>base</text>
              <text x="0" y="14" fontSize="8" fontWeight="800" fontFamily='"Open Sans", sans-serif'>alt</text>
              <path d="M13 8l4 2 3-4-1 6 3 6h-4l-3-4-4 4h-4l5-5z" fill="#111" />
              <path d="M15 14l3 3h-5z" fill="#fff" />
            </svg>
            Меню
          </Launcher>
          <Launcher $w={25} $pad={4} aria-label="Домашняя папка">
            <Folder mark="M7.500 9v-1.500h1.500M12 7.500h1.500v1.500M13.500 12v1.500h-1.500M9 13.500h-1.500v-1.500M9.500 9.500h2v2h-2z" />
          </Launcher>
          <Launcher $w={31} $pad={4} aria-label="Яндекс Браузер">
            <svg width="24" height="24" viewBox="0 0 24 24">
              <circle cx="12" cy="12" r="11" fill="#f7f7f7" stroke="#b8b8b8" />
              <path d="M7 6l5 7 5-7M12 12v8" stroke="#e0101f" strokeWidth="3" fill="none" />
            </svg>
          </Launcher>
          <DesktopCell aria-label="Рабочий стол 1" $active><WindowIcon /></DesktopCell>
          <DesktopCell aria-label="Рабочий стол 2" />
          <Grip />
          <Task $w={191} $pad={4}>
            <Folder size={17} mark="M10.500 6v6M8 10l2.500 3 2.500-3" />
            Загрузки
          </Task>
          <Task $w={192} $pad={5} $active>
            <WindowIcon />
            проверка границ .docx - L...
          </Task>
          <Tray>
            <Grip />
            <svg width="20" height="20" viewBox="0 0 20 20" fill="none">
              <path d="M5 6v-4h10v4M2.500 17v-10h14v4M4 7v11h6" stroke="#5a5a5a" strokeWidth="2" />
              <circle cx="15" cy="14" r="4" fill="#e0454f" />
              <path d="M12.500 16.500l5-5" stroke="#fff" />
            </svg>
            <Language>en</Language>
            <svg width="31" height="28" viewBox="0 0 31 28">
              <rect x="2.5" y="1.500" width="28" height="20" rx="2" fill="#ececec" stroke="#8a8a8a" />
              <path d="M5 4h23v15h-23z" fill="#4c5250" />
              <path d="M12 21h8l3 6h-14z" fill="#e4e4e4" stroke="#9a9a9a" />
              <path d="M3 1l26 18h-26zM8 10v6h8z" fill="#f0d040" stroke="#a88a10" fillRule="evenodd" />
            </svg>
            <svg width="28" height="26" viewBox="0 0 28 26">
              <path d="M2 9h5l8-7q8 11 0 23l-8-8h-5q-2-4 0-8z" fill="#b4b4b4" stroke="#5e5e5e" />
              <ellipse cx="16" cy="13" rx="5" ry="11" fill="#8a8a8a" stroke="#555" />
              <ellipse cx="16" cy="13" rx="2" ry="5" fill="#d8d8d8" />
              <path d="M25 8q3 5 0 10" stroke="#7aa4d8" fill="none" />
            </svg>
            <Gap $w={10} />
            <svg width="21" height="22" viewBox="0 0 21 22">
              <rect x="1.5" y="2.500" width="15" height="18" rx="1" fill="#e6ab55" stroke="#a86f1c" />
              <rect x="5" y="1" width="8" height="4" rx="1" fill="#9a9a9a" />
              <path d="M8.500 8.500h11v12h-11z" fill="#f4f4f4" stroke="#8a8a8a" />
              <path d="M10 12h8M10 14.500h8M10 17h5" stroke="#999" />
            </svg>
            <Gap $w={5} />
            <svg width="20" height="20" viewBox="0 0 20 20" fill="#3c66ad" stroke="#20365c">
              <path d="M.5 14.500h3v4h-3zM4.500 11.500h3v7h-3zM8.500 7.500h3v11h-3zM12.500 4.500h3v14h-3zM16.500 1.500h2v17h-2z" />
            </svg>
            <Gap $w={10} />
            <svg width="22" height="26" viewBox="0 0 22 26">
              <path d="M8 1h6l2 3h-10z" fill="#e4e4e4" stroke="#888" />
              <rect x="1.500" y="4.500" width="19" height="20" rx="5" fill="#5d8fc9" stroke="#a0a0a0" />
              <ellipse cx="11" cy="6.500" rx="8.500" ry="2.500" fill="#dfe6ee" />
              <path d="M5 11v11" stroke="#a9c8ec" strokeWidth="3" />
            </svg>
            <Gap $w={10} />
            <time>Пн,&nbsp; 5 дек, 22:51</time>
          </Tray>
        </TaskBar>
      </Window>
    </>
  );
};

const GlobalStyle = createGlobalStyle`
  * {
    box-sizing: border-box;
  }
  body {
    margin: 0;
    background: #d4d4d4;
    color: #333;
    font: 12px/18px "Noto Sans", "Open Sans", sans-serif;
  }
  button {
    margin: 0;
    padding: 0;
    border: 0;
    background: none;
    color: inherit;
    font: inherit;
  }
  svg {
    display: block;
    flex: none;
  }
`;

const pressedLook = css`
  background: linear-gradient(#a6a6a6, #bcbcbc);
  border: 1px solid #7f7f7f;
  border-radius: 3px;
`;

const Window = styled.div`
  display: flex;
  flex-direction: column;
  min-height: 100vh;
`;

const TitleBar = styled.header`
  display: flex;
  align-items: center;
  height: 24px;
  padding: 0 2px 0 3px;
  background: linear-gradient(#7ba7d9, #5689c0);
  border-top: 1px solid #3c648f;
  border-bottom: 1px solid #3c648f;

  h1 {
    flex: 1;
    margin: 0;
    color: #fff;
    font-size: 13px;
    font-weight: 700;
    line-height: 18px;
    text-align: center;
    text-shadow: 0 0 2px #1f4c80;
  }
`;

const WindowButtons = styled.div`
  display: flex;
  gap: 2px;

  button {
    border: 1px solid #416f9f;
    border-radius: 3px;
    background: linear-gradient(#83aede, #5c8fc6);
  }
`;

const MenuBar = styled.nav`
  display: flex;
  align-items: center;
  gap: 13px;
  height: 26px;
  padding: 0 10px 1px 6px;
  background: linear-gradient(#d4d4d4, #cacaca);
`;

const CloseDoc = styled.button`
  margin-left: auto;
`;

const ToolBar = styled.div`
  display: flex;
  align-items: center;
  height: ${(p) => p.$h}px;
  padding: 0 2px 0 ${(p) => p.$pad}px;
`;

const TableToolBar = styled(ToolBar)`
  align-items: flex-start;
  height: 41px;
  padding: 3px 0 0 4px;
  border-top: 1px solid #969696;
  border-bottom: 1px solid #969696;
`;

const Tool = styled.button`
  display: flex;
  align-items: center;
  justify-content: center;
  flex: none;
  width: 31px;
  height: 32px;
  margin: 0 1px;
  border: 1px solid transparent;
  ${(p) => p.$pressed && pressedLook}
`;

const DropArrow = styled.button`
  display: flex;
  align-items: center;
  justify-content: center;
  flex: none;
  width: 11px;
  height: 32px;
  padding-top: 4px;
`;

const Gap = styled.span`
  flex: none;
  width: ${(p) => p.$w}px;
`;

const ComboBox = styled.div`
  display: grid;
  grid-template-columns: 1fr 26px;
  flex: none;
  width: ${(p) => p.$w}px;
  height: 30px;
  border: 1px solid #7c7f82;
  border-radius: 3px;
  background: linear-gradient(#e8e8e8, #fafafa);
  overflow: hidden;

  select {
    grid-area: 1 / 1 / 2 / 3;
    appearance: none;
    padding: 0 30px 0 4px;
    border: 0;
    background: none;
    color: #333;
    font: inherit;
  }
  span {
    display: flex;
    align-items: center;
    justify-content: center;
    grid-area: 1 / 2 / 2 / 3;
    border-left: 1px solid #a5b4c4;
    background: linear-gradient(#f4f4f4, #d6d6d6);
    pointer-events: none;
  }
`;

const More = styled.button`
  margin-left: auto;
`;

const Workspace = styled.main`
  display: flex;
  flex: 1;
`;

const Editor = styled.section`
  display: flex;
  flex: 1;
  flex-direction: column;
  min-width: 0;
`;

const EditorRow = styled.div`
  display: flex;
  flex: 1;
`;

const PaperColumn = styled.div`
  display: flex;
  flex: 1;
  flex-direction: column;
  min-width: 0;
  padding: 4px 17px 0 5px;
`;

const Ruler = styled.div`
  display: flex;
  height: 16px;
  margin-right: 2px;
  color: #8a8a8a;
  font-size: 10px;
  line-height: 14px;

  i {
    font-style: normal;
    text-align: center;
  }
`;

const TabStop = styled.div`
  width: 6px;
  height: 6px;
  margin: 5px 7px 0 3px;
  border-left: 2px solid #7c7c7c;
  border-bottom: 2px solid #7c7c7c;
`;

const RulerMargin = styled.div`
  display: grid;
  grid-template-columns: ${(p) => (p.$side === "left" ? "30px 1fr" : "1fr")};
  flex: none;
  width: ${(p) => p.$w}px;
  padding-left: ${(p) => (p.$side === "left" ? 0 : 20)}px;
  border: 1px solid #8f8f8f;
  border-left-width: ${(p) => (p.$side === "left" ? 0 : 1)}px;
`;

const RulerBody = styled.div`
  position: relative;
  display: grid;
  grid-template-columns: repeat(17, minmax(0, 1fr));
  flex: 1;
  padding-left: 41px;
  margin-right: -18px;
  background: linear-gradient(#f7f7f7, #f7f7f7) 0 0 / calc(100% - 18px) 100% no-repeat;
`;

const Marker = styled.span`
  position: absolute;
  top: -1px;
  left: ${(p) => p.$at};
  margin-left: -7px;
`;

const TabTick = styled.span`
  position: absolute;
  bottom: 0;
  left: ${(p) => p.$at};
  width: 5px;
  height: 4px;
  margin-left: -2px;
  background:
    linear-gradient(#6e6e6e, #6e6e6e) 2px 0 / 1px 4px no-repeat,
    linear-gradient(#6e6e6e, #6e6e6e) 0 3px / 5px 1px no-repeat;
`;

const ColumnMark = styled.span`
  position: absolute;
  top: 0;
  left: calc((100% - 18px) * ${(p) => p.$at / 100});
  width: 3px;
  height: 16px;
  margin-left: -1px;
  border: solid #8a8a8a;
  border-width: 0 1px;
`;

const Page = styled.article`
  flex: 1;
  margin-top: 5px;
  padding: 112px 78px 64px 140px;
  background: #fff;
  border-left: 1px solid #8e8e8e;
  border-right: 1px solid #8e8e8e;
`;

const TableWrap = styled.div`
  position: relative;
`;

const CropMark = styled.span`
  position: absolute;
  top: -22px;
  ${(p) => p.$side}: -22px;
  width: 22px;
  height: 22px;
  border-bottom: 1px solid #c4c4c4;
  ${(p) => (p.$side === "left" ? "border-right" : "border-left")}: 1px solid #c4c4c4;
`;

const DocTable = styled.table`
  width: 100%;
  table-layout: fixed;
  border-collapse: separate;
  border-spacing: 0;
  color: #000;
  font-family: "Liberation Serif", serif;
  font-size: 30px;
  line-height: 34px;
`;

const Cell = styled.td`
  height: ${(p) => p.$h}px;
  padding: 0;
  border-left: 1px solid #000;
  border-bottom: ${(p) => (p.$last ? "2px solid #6f6f6f" : "0")};

  &:last-child {
    border-right: 1px solid #000;
  }
`;

const HeadCell = styled.th`
  height: 43px;
  padding: 1px 0 6px 12px;
  border-left: 1px solid #000;
  background: linear-gradient(#888 1px, #000 1px 2px, transparent 2px 38px, #888 38px 39px, #000 39px 40px, #bbb 40px 41px, #888 41px 42px, #000 42px);
  font-weight: 400;
  text-align: left;

  &:last-child {
    border-right: 1px solid #000;
  }
`;

/* one period of each border pattern: its length and the inked stretches in it */
const patterns = {
  dotted: { size: 2, soft: false, marks: [[0, 1]] },
  dashed: { size: 22, soft: true, marks: [[0, 17]] },
  dashdot: { size: 33, soft: true, marks: [[0, 17], [22, 27]] },
};

const borderLayers = ({ $kind }) => {
  const { size, soft, marks } = patterns[$kind];
  const stroke = (dir, color) =>
    `linear-gradient(${dir}, ${marks
      .map(([from, to]) => `transparent ${from}px, ${color} ${from}px ${to}px, transparent ${to}px`)
      .join(", ")})`;
  const row = (color, y) => `${stroke("to right", color)} 1px ${y} / ${size}px 1px repeat-x`;
  const col = (color, x) => `${stroke("to bottom", color)} ${x} 0 / 1px ${size}px repeat-y`;
  const layers = [row("#000", soft ? "1px" : "0"), row("#000", "100%"), col("#000", "0"), col("#000", "100%")];
  if (soft) {
    layers.push(row("#888", "0"), row("#888", "calc(100% - 1px)"), col("#888", "calc(100% - 1px)"));
  }
  return layers.join(", ");
};

const Merged = styled.td`
  height: ${(p) => p.$h}px;
  padding: 0 0 3px;
  text-align: center;
  background: ${borderLayers};
`;

const scrollTrack = css`
  display: flex;

  button {
    display: flex;
    align-items: center;
    justify-content: center;
    flex: none;
    background: #c8c8c8;
  }
  div {
    flex: 1;
  }
`;

const VScroll = styled.div`
  ${scrollTrack}
  flex-direction: column;
  width: 13px;
  padding-bottom: 2px;
  background: linear-gradient(to right, #c6c6c6, #dedede);

  button {
    height: 17px;
  }
  div {
    padding-top: 9px;
  }
`;

const VThumb = styled.span`
  display: block;
  height: 135px;
  border: 1px solid #8f8f8f;
  border-radius: 7px;
  background: linear-gradient(to right, #c9c9c9, #acacac);
`;

const HScroll = styled.div`
  ${scrollTrack}
  height: 12px;
  margin-right: 15px;
  background: #dcdcdc;

  button {
    width: 17px;
  }
  div {
    padding: 0 13px 0 22px;
  }
`;

const HThumb = styled.span`
  display: block;
  height: 12px;
  border: 1px solid #9c9c9c;
  border-width: 0 1px;
  border-radius: 6px;
  background: linear-gradient(#c9c9c9, #b4b4b4);
`;

const SideBar = styled.aside`
  display: flex;
  flex: none;
  width: 58px;
  border-left: 1px solid #8c8c8c;
`;

const Handle = styled.button`
  display: flex;
  align-items: center;
  align-self: center;
  width: 6px;
  height: 73px;
  background: #7d7d7d;
`;

const SideTabs = styled.div`
  display: flex;
  flex-direction: column;
  gap: 8px;
  padding: 4px 0 0 6px;
`;

const SideTab = styled.button`
  display: flex;
  align-items: center;
  justify-content: center;
  width: 36px;
  height: 35px;
  border: 1px solid transparent;
  ${(p) => p.$menu && "height: 34px; margin-bottom: 3px;"}
  ${(p) => p.$pressed && pressedLook}
`;

const StatusBar = styled.footer`
  display: grid;
  grid-template-columns: 41px 206fr 233fr 206fr 178fr 108fr 140fr 74px 180px;
  align-items: center;
  height: 25px;
  border-bottom: 1px solid #969696;
`;

const SaveState = styled.span`
  padding-left: 12px;
`;

const ViewModes = styled.div`
  display: flex;
  gap: 5px;
`;

const ZoomBox = styled.div`
  display: flex;
  align-items: center;
  gap: 5px;

  output {
    margin-left: auto;
    padding-right: 7px;
  }
`;

const ZoomSlider = styled.input`
  appearance: none;
  width: 98px;
  height: 14px;
  margin: 0;
  background:
    linear-gradient(#8a8a8a, #8a8a8a) 13px 50% / 2px 6px no-repeat,
    linear-gradient(#8a8a8a, #8a8a8a) 47px 50% / 2px 6px no-repeat,
    linear-gradient(#8a8a8a, #8a8a8a) 0 50% / 100% 2px no-repeat;

  &::-webkit-slider-thumb {
    appearance: none;
    width: 4px;
    height: 10px;
    border: 1px solid #333;
    background: #f4f4f4;
  }
`;

const TaskBar = styled.footer`
  display: flex;
  align-items: center;
  height: 30px;
`;

const Launcher = styled.button`
  display: flex;
  align-items: center;
  flex: none;
  gap: ${(p) => p.$gap || 0}px;
  width: ${(p) => p.$w}px;
  height: 30px;
  padding-left: ${(p) => p.$pad}px;
`;

const DesktopCell = styled.button`
  display: flex;
  align-items: center;
  justify-content: center;
  flex: none;
  width: 28px;
  height: 30px;
  margin-right: 1px;
  background: ${(p) => (p.$active ? "linear-gradient(#92b4da, #6a93c4)" : "#979797")};
  border-bottom: ${(p) => (p.$active ? "1px solid #222" : "0")};
`;

const Grip = styled.span`
  width: 4px;
  height: 16px;
  margin: 0 2px 0 3px;
  background: repeating-linear-gradient(#bababa 0 4px, transparent 4px 6px);
`;

const Task = styled.button`
  display: flex;
  align-items: center;
  flex: none;
  gap: 8px;
  width: ${(p) => p.$w}px;
  height: 30px;
  padding-left: ${(p) => p.$pad}px;
  white-space: nowrap;
  background: ${(p) => (p.$active ? "linear-gradient(#cfcfcf, #b2b2b2)" : "none")};
`;

const Tray = styled.div`
  display: flex;
  align-items: center;
  margin-left: auto;
  padding-right: 5px;
`;

const Language = styled.span`
  padding: 0 11px;
`;

export default App;
